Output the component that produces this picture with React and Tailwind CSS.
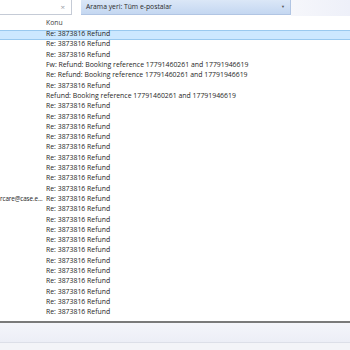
import React from 'react';

const rows = [
    "Re: 3873816 Refund",
    "Re: 3873816 Refund",
    "Re: 3873816 Refund",
    "Fw: Refund: Booking reference 17791460261 and 17791946619",
    "Re: Refund: Booking reference 17791460261 and 17791946619",
    "Re: 3873816 Refund",
    "Refund: Booking reference 17791460261 and 17791946619",
    "Re: 3873816 Refund",
    "Re: 3873816 Refund",
    "Re: 3873816 Refund",
    "Re: 3873816 Refund",
    "Re: 3873816 Refund",
    "Re: 3873816 Refund",
    "Re: 3873816 Refund",
    "Re: 3873816 Refund",
    "Re: 3873816 Refund",
    "Re: 3873816 Refund",
    "Re: 3873816 Refund",
    "Re: 3873816 Refund",
    "Re: 3873816 Refund",
    "Re: 3873816 Refund",
    "Re: 3873816 Refund",
    "Re: 3873816 Refund",
    "Re: 3873816 Refund",
    "Re: 3873816 Refund",
    "Re: 3873816 Refund",
    "Re: 3873816 Refund",
    "Re: 3873816 Refund",
];

export default function App() {
    return (
        <div className="w-[350px] h-[350px] overflow-hidden bg-white flex flex-col text-[#1e1e1e]" style={{ fontFamily: '"Open Sans", "Noto Sans", sans-serif' }}>
            {/* search bar */}
            <div className="h-[16px] flex items-start shrink-0">
                <div className="w-[72px] h-[15px] border-r border-b border-[#c5cbd6] bg-white flex items-center justify-end pr-[6px]">
                    <span className="text-[8px] text-[#9aa0a8] leading-none">×</span>
                </div>
                <div className="ml-[9px] w-[210px] h-[15px] bg-gradient-to-b from-[#dbe7f7] to-[#c4d7f1] border-b border-r border-[#b1c5e3] flex items-center justify-between pl-[5px] pr-[5px]">
                    <span className="text-[6.8px] leading-none text-[#2a2a2a]">Arama yeri: Tüm e-postalar</span>
                    <span className="text-[4px] leading-none text-[#555]">▼</span>
                </div>
                <div className="flex-1 h-[16px] bg-gradient-to-r from-[#f6f7fb] to-[#eef0f9]" />
            </div>

            {/* header */}
            <div className="h-[13px] pl-[46px] pt-[1px] flex items-center text-[6.8px] leading-none text-[#3c3c3c] shrink-0">
                Konu
            </div>

            {/* list */}
            <div className="relative flex-1 flex flex-col pt-[0.5px]">
                {rows.map((r, i) => (
                    <div
                        key={i}
                        className={
                            i === 0
                                ? "h-[10.3px] flex items-center pl-[46px] text-[6.9px] leading-none bg-[#cce8ff] border-y border-[#99c9ef]"
                                : "h-[10.3px] flex items-center pl-[46px] text-[6.9px] leading-none"
                        }
                    >
                        {r}
                    </div>
                ))}
                <div className="absolute left-0 top-[165.5px] h-[10px] flex items-center text-[6.3px] tracking-[-0.1px] leading-none whitespace-nowrap">
                    rcare@case.e...
                </div>
            </div>

            {/* bottom */}
            <div className="h-[2px] bg-[#7a7a7a] shrink-0" />
            <div className="h-[20px] bg-gradient-to-b from-[#f4f5fa] to-[#eceef6] border-b border-[#dcdfe8] shrink-0" />
            <div className="h-[7px] bg-[#f3f4f8] shrink-0" />
        </div>
    );
}
